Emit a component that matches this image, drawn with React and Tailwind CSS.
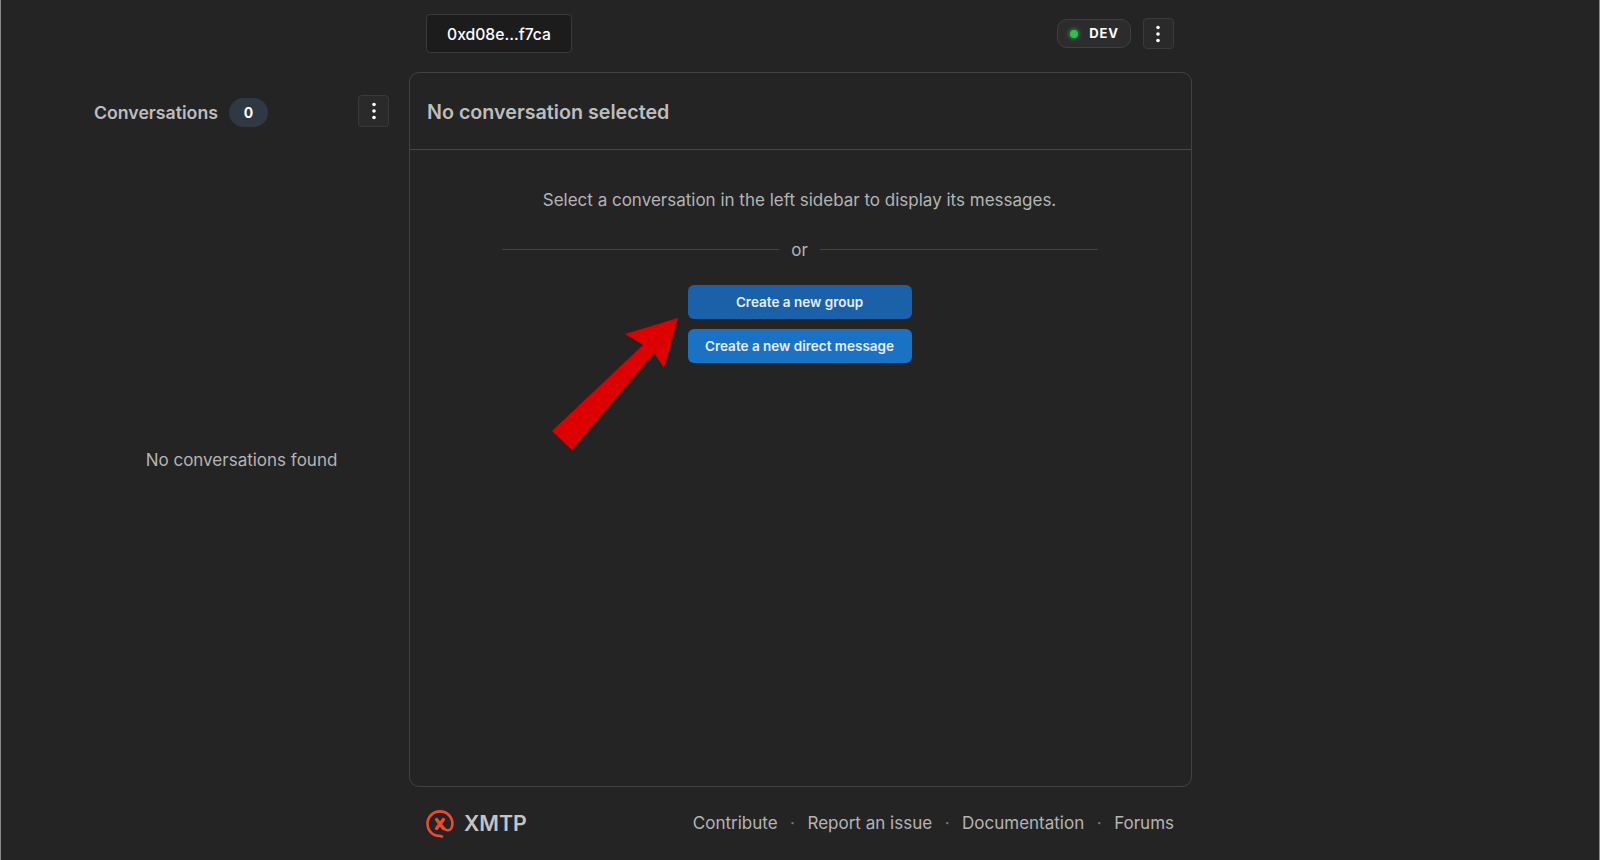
const LINKS = ['Contribute', 'Report an issue', 'Documentation', 'Forums']

function Kebab({ className }) {
  return (
    <button className={`flex items-center justify-center rounded border border-[#3a3a3a] bg-[#2a2a2a] text-white ${className}`}>
      <svg width="8" height="22" viewBox="0 0 8 22" fill="currentColor">
        <circle cx="4" cy="4.5" r="1.8" />
        <circle cx="4" cy="11" r="1.8" />
        <circle cx="4" cy="17.5" r="1.8" />
      </svg>
    </button>
  )
}

function XmtpLogo() {
  return (
    <svg width="28" height="28" viewBox="0 0 28 28" fill="none" stroke="#f0492f" strokeWidth="2.6" strokeLinecap="round">
      <path d="M16 26.6 C14.8 26.4 13.8 25.9 13.5 25.9 C6.5 25.9 1.5 20.5 1.5 13.7 C1.5 6.8 7 1.4 14 1.4 C21 1.4 26.4 6.8 26.4 13.7 C26.4 17.5 24.5 20.3 21.8 20.3 C20 20.3 18.8 19.3 18 18.2" />
      <path d="M10.5 9.5 L17.5 18.5 M17.5 9.5 L10.5 18.5" strokeWidth="3.4" />
    </svg>
  )
}

export default function App() {
  return (
    <div className="flex h-[860px] w-[1600px] overflow-hidden border-x border-x-[#8a8a8a] bg-[#242424] font-['Inter',sans-serif]">
      {/* Sidebar */}
      <aside className="flex w-[408px] shrink-0 flex-col pt-[95px]">
        <div className="flex h-8 items-start pl-[93px] pr-5">
          <h2 className="mt-0.5 text-[17.7px] leading-8 font-semibold text-[#bdbdbd]">Conversations</h2>
          <span className="mt-[3px] ml-[11px] flex h-[29px] w-[39px] items-center justify-center rounded-full bg-[#2f3843] text-sm font-bold text-white">0</span>
          <Kebab className="ml-auto h-8 w-[31px]" />
        </div>
        <p className="mt-[321px] pl-[73px] text-center text-[17px] leading-6 text-[#b4b4b4]">No conversations found</p>
      </aside>

      {/* Main column */}
      <div className="flex w-[783px] shrink-0 flex-col">
        <header className="flex h-[72px] items-start pt-[14px] pr-[18px] pl-[17px]">
          <div className="flex h-[39px] w-[146px] items-center justify-center rounded border border-[#3a3a3a] bg-[#1c1c1c] pt-[2px] text-[15.7px] font-medium text-white">
            0xd08e...f7ca
          </div>
          <div className="mt-[5px] ml-auto flex h-[29px] w-[74px] items-center justify-center gap-[11px] rounded-[10px] border border-[#3f3f3f] bg-[#2c2c2c] pl-px">
            <span className="h-2 w-2 rounded-full bg-[#2fbf4f] shadow-[0_0_5px_#2fbf4f]" />
            <span className="text-[13px] font-bold tracking-[0.07em] text-white">DEV</span>
          </div>
          <Kebab className="mt-1 ml-3 h-[31px] w-[31px] pr-px" />
        </header>

        <main className="relative flex h-[715px] flex-col rounded-[10px] border border-[#424242]">
          <div className="flex h-[77px] shrink-0 items-center border-b border-[#484848] pt-[3px] pl-[17px]">
            <h1 className="text-[19.7px] font-semibold text-[#bdbdbd]">No conversation selected</h1>
          </div>
          <div className="flex flex-col items-center pt-[38px] pr-[2px]">
            <p className="text-[17px] leading-6 text-[#b4b4b4]">Select a conversation in the left sidebar to display its messages.</p>
            <div className="mt-[25px] flex w-[596px] items-center gap-3">
              <div className="h-px flex-1 bg-[#444444]" />
              <span className="translate-y-px text-[17px] leading-6 text-[#b4b4b4]">or</span>
              <div className="h-px flex-1 bg-[#444444]" />
            </div>
            <button className="mt-6 h-[34px] w-[224px] rounded-md bg-[#1a61aa] text-[13.5px] font-semibold text-[#e8eef6]">Create a new group</button>
            <button className="mt-[10px] h-[34px] w-[224px] rounded-md bg-[#1a72c4] pt-px text-[13.5px] font-semibold text-[#e8eef6]">Create a new direct message</button>
          </div>

          {/* Annotation arrow */}
          <svg className="absolute top-[244px] left-[141px]" width="128" height="134" viewBox="0 0 128 134">
            <polygon points="127,1 74,17 92,28 1,114 21,133 103,36 113,51" fill="#dc0000" />
          </svg>
        </main>

        <footer className="flex flex-1 items-center pr-[18px] pl-[17px]">
          <XmtpLogo />
          <span className="ml-[10px] text-[21.3px] font-semibold text-[#c4c4c4]">XMTP</span>
          <nav className="ml-auto flex items-center text-[17px] text-[#b4b4b4]">
            {LINKS.map((l, i) => (
              <span key={l} className="flex items-center">
                {i > 0 && <span className="mx-[12.5px] text-[17px] text-[#777777]">·</span>}
                {l}
              </span>
            ))}
          </nav>
        </footer>
      </div>
    </div>
  )
}
